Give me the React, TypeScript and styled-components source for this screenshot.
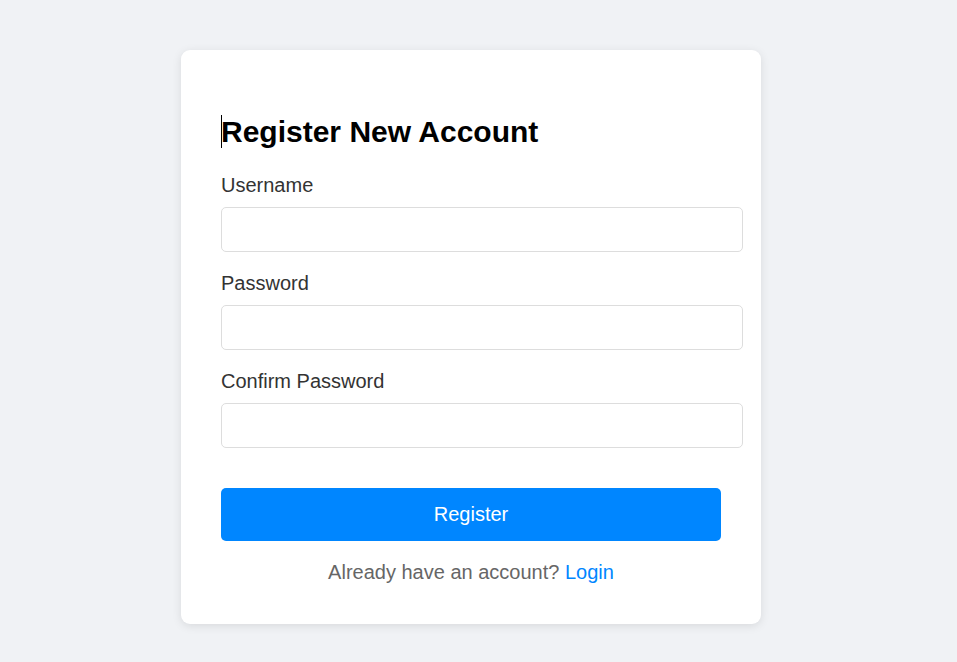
import React from "react";
import styled, { createGlobalStyle } from "styled-components";

const GlobalStyle = createGlobalStyle`
  html, body {
    margin: 0;
    padding: 0;
    background: #f0f2f5;
    font-family: "Liberation Sans", Arial, sans-serif;
  }
  * { box-sizing: content-box; }
`;

const Page = styled.div`
  display: flex;
  justify-content: center;
  padding: 50px 15px 40px 0;
`;

const Card = styled.div`
  width: 500px;
  padding: 40px;
  background: #ffffff;
  border-radius: 9px;
  box-shadow: 0 2px 10px rgba(0, 0, 0, 0.1);
`;

const Title = styled.h2`
  position: relative;
  margin: 25px 0;
  font-size: 30px;
  font-weight: bold;
  color: #000;
  &::before {
    content: "";
    position: absolute;
    left: 0;
    top: 0;
    bottom: 1px;
    width: 1px;
    background: #000;
  }
`;

const Group = styled.div`
  margin-bottom: 20px;
`;

const Label = styled.label`
  display: block;
  margin-bottom: 10px;
  font-size: 20px;
  line-height: 23px;
  color: #333;
`;

const Input = styled.input`
  display: block;
  width: 100%;
  padding: 10px;
  font-size: 20px;
  line-height: 23px;
  height: 23px;
  font-family: inherit;
  border: 1px solid #ddd;
  border-radius: 5px;
  background: #fff;
  outline: none;
`;

const Button = styled.button`
  display: block;
  width: 100%;
  box-sizing: border-box;
  height: 53px;
  margin-top: 40px;
  border: none;
  border-radius: 5px;
  background: #0086ff;
  color: #fff;
  font-family: inherit;
  font-size: 20px;
  line-height: 23px;
  cursor: pointer;
`;

const Footer = styled.p`
  margin: 20px 0 0;
  text-align: center;
  font-size: 20px;
  line-height: 23px;
  color: #666;
`;

const Link = styled.a`
  color: #0086ff;
  text-decoration: none;
`;

const Form = styled.form`
  margin: 0;
  & > ${Group}:last-of-type {
    margin-bottom: 0;
  }
`;

export default function App() {
  return (
    <>
      <GlobalStyle />
      <Page>
        <Card>
          <Title>Register New Account</Title>
          <Form onSubmit={(e) => e.preventDefault()}>
            <Group>
              <Label>Username</Label>
              <Input type="text" />
            </Group>
            <Group>
              <Label>Password</Label>
              <Input type="password" />
            </Group>
            <Group>
              <Label>Confirm Password</Label>
              <Input type="password" />
            </Group>
            <Button type="submit">Register</Button>
          </Form>
          <Footer>
            Already have an account? <Link href="#">Login</Link>
          </Footer>
        </Card>
      </Page>
    </>
  );
}
